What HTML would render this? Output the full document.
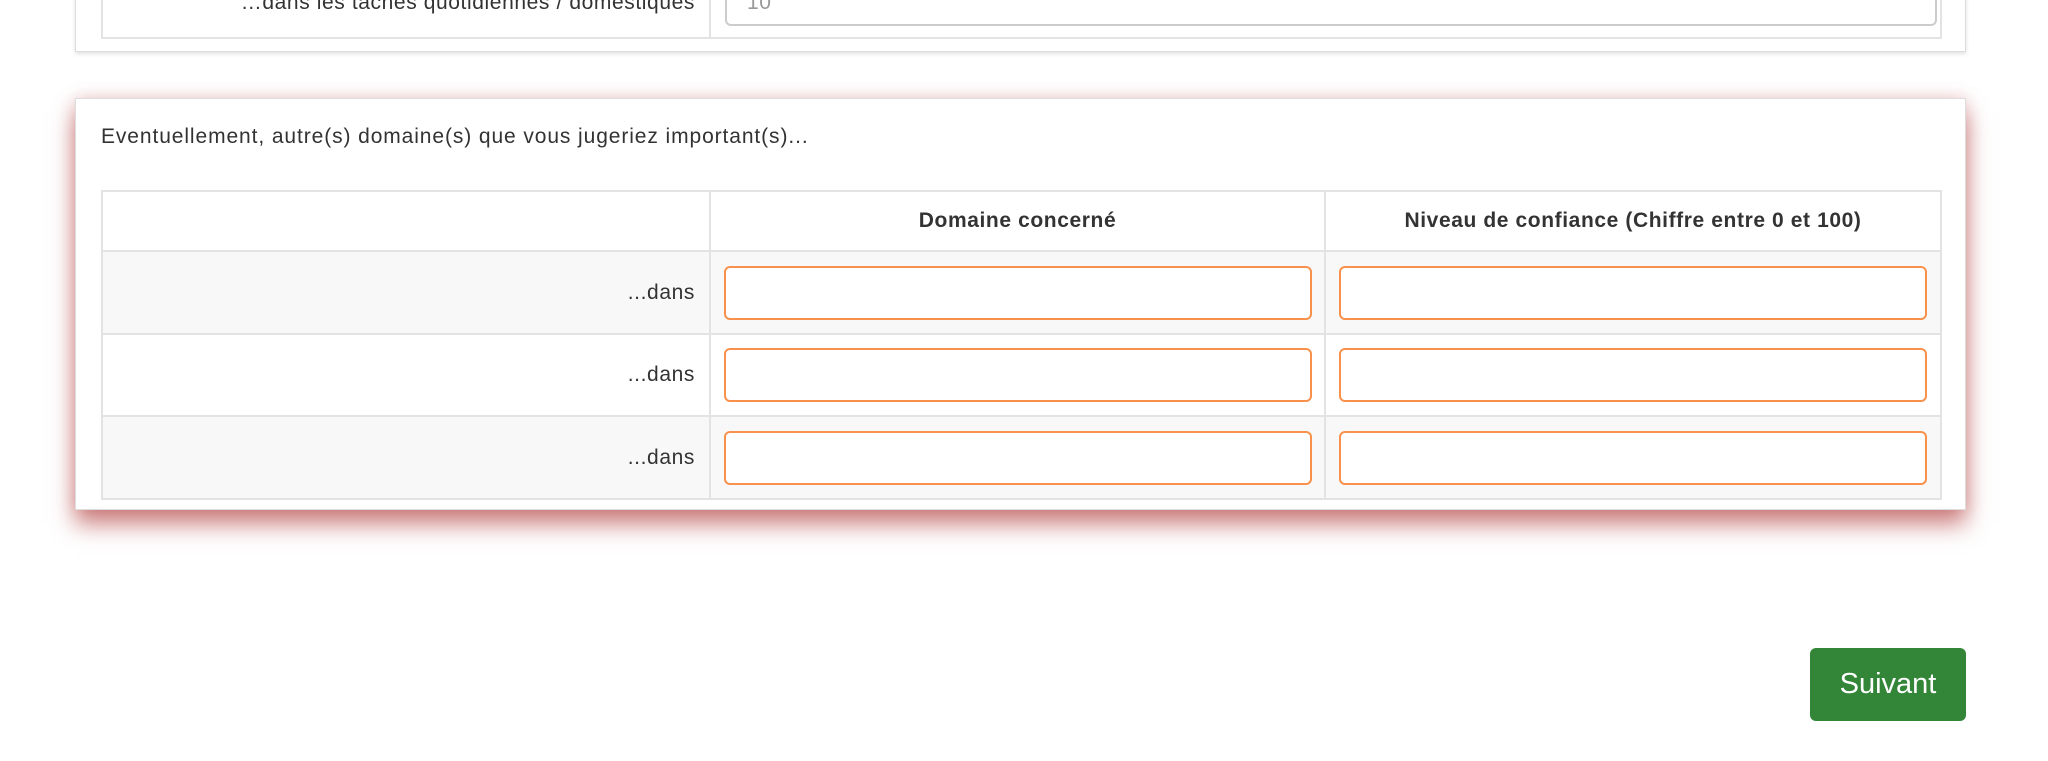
<!DOCTYPE html>
<html><head><meta charset="utf-8"><style>
*{box-sizing:border-box}
body{margin:0;width:2048px;height:761px;background:#fff;font-family:"Liberation Sans",sans-serif;color:#333;position:relative;overflow:hidden}
.panel{position:absolute;background:#fff;border:1px solid #ddd}
.p1{left:75px;top:-20px;width:1891px;height:72px;box-shadow:0 2px 4px rgba(0,0,0,.12)}
.p2{left:75px;top:98px;width:1891px;height:412px;box-shadow:0 14px 22px rgba(170,40,40,.6),0 -2px 14px rgba(200,90,90,.2)}
table{position:absolute;border-collapse:collapse;font-size:21px;letter-spacing:0.6px}
td,th{border:2px solid #e3e3e3;padding:0}
.lab{text-align:right;padding-right:14px}
.inp{display:block;margin:0 auto;width:588px;height:54px;border:2px solid #f7914c;border-radius:6px;background:#fff}
.btn{position:absolute;left:1810px;top:648px;width:156px;height:73px;background:#338538;border-radius:6px;color:#fff;font-size:29px;text-align:center;line-height:73px}
</style></head><body>
<div class="panel p1">
<table style="left:25px;top:0;width:1841px;height:58px">
<tr><td class="lab" style="width:608px;vertical-align:top;line-height:0"><span style="position:relative;top:20px">…dans les tâches quotidiennes / domestiques</span></td>
<td style="padding-left:14px;vertical-align:top"><div style="width:1212px;height:43px;border:2px solid #ccc;border-top:none;border-radius:0 0 6px 6px;color:#999;padding-left:20px;line-height:0"><span style="position:relative;top:20px">10</span></div></td></tr>
</table></div>
<div class="panel p2">
<div style="position:absolute;left:25px;top:24px;font-size:21px;letter-spacing:0.9px;line-height:28px">Eventuellement, autre(s) domaine(s) que vous jugeriez important(s)...</div>
<table style="left:25px;top:91px;width:1841px">
<tr style="height:60px"><th style="width:608px"></th><th style="width:615px">Domaine concerné</th><th>Niveau de confiance (Chiffre entre 0 et 100)</th></tr>
<tr style="height:83px;background:#f8f8f8"><td class="lab">...dans</td><td><div class="inp"></div></td><td><div class="inp"></div></td></tr>
<tr style="height:82px"><td class="lab">...dans</td><td><div class="inp"></div></td><td><div class="inp"></div></td></tr>
<tr style="height:83px;background:#f8f8f8"><td class="lab">...dans</td><td><div class="inp"></div></td><td><div class="inp"></div></td></tr>
</table></div>
<div class="btn">Suivant</div>
</body></html>
